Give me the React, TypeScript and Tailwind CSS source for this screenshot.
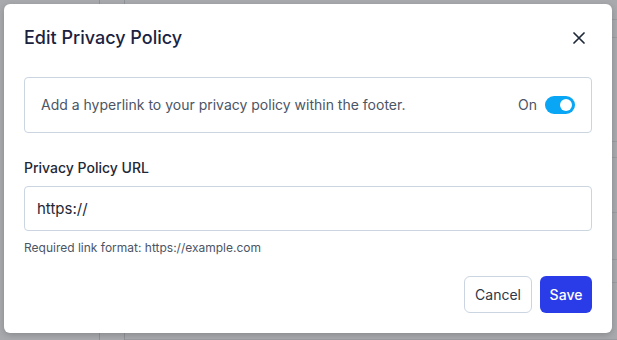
import * as React from 'react'

// Backdrop rows seen through the overlay on the right edge
const rowHeights = [20, 18, 104, 16, 55, 47, 23, 57]

function Toggle({ on }: { on: boolean }) {
  return (
    <span
      className={
        'inline-flex h-[18px] w-[30px] items-center rounded-full px-[3px] ' +
        (on ? 'justify-end bg-[#08a6f4]' : 'justify-start bg-[#cbd5e1]')
      }
    >
      <span className="h-[12px] w-[12px] rounded-full bg-white" />
    </span>
  )
}

export default function App() {
  const [enabled, setEnabled] = React.useState(true)
  const [url, setUrl] = React.useState('https://')

  return (
    <div
      className="relative h-[340px] w-[617px] overflow-hidden bg-[#a8a9ad]"
      style={{ fontFamily: 'Inter, "Noto Sans", sans-serif' }}
    >
      {/* page behind the dim overlay */}
      <div className="flex h-full">
        <div className="w-[100px] border-r border-[#8f9297]" />
        <div className="w-[25px] border-r border-[#8f9297]" />
        <div className="flex flex-1 flex-col">
          {rowHeights.map((h, i) => (
            <div key={i} className="border-b border-[#9a9ca1]" style={{ height: h }} />
          ))}
        </div>
      </div>

      {/* dialog */}
      <div className="absolute left-[4px] top-[4px] flex h-[329px] w-[608px] flex-col rounded-[6px] bg-white px-5 pb-5 pt-5 shadow-[0_2px_6px_rgba(0,0,0,0.18)]">
        <div className="flex h-[28px] items-center justify-between">
          <h2 className="text-[18px] font-medium leading-[28px] text-[#1b2240]">Edit Privacy Policy</h2>
          <button type="button" aria-label="Close" className="mr-[7px] text-[#1f2937]">
            <svg width="12" height="12" viewBox="0 0 12 12" fill="none" stroke="currentColor" strokeWidth="1.7" strokeLinecap="round">
              <path d="M1 1l10 10M11 1L1 11" />
            </svg>
          </button>
        </div>

        <div className="mt-[25px] flex h-[56px] items-center justify-between rounded-[4px] border border-[#cbd5e1] pl-4 pr-4">
          <span className="text-[14px] leading-5 text-[#4b5565]">
            Add a hyperlink to your privacy policy within the footer.
          </span>
          <button type="button" onClick={() => setEnabled(!enabled)} className="flex items-center gap-[8px]">
            <span className="text-[14px] leading-5 text-[#4b5565]">{enabled ? 'On' : 'Off'}</span>
            <Toggle on={enabled} />
          </button>
        </div>

        <label className="mt-[25px] text-[14px] font-medium leading-5 text-[#1f2937]">Privacy Policy URL</label>
        <input
          value={url}
          onChange={(e) => setUrl(e.target.value)}
          className="mt-[8px] h-[45px] rounded-[4px] border border-[#cbd5e1] pl-3 text-[15px] text-[#1f2937] outline-none"
        />
        <p className="mt-[9px] text-[12px] leading-4 text-[#4b5565]">Required link format: https://example.com</p>

        <div className="mt-auto flex justify-end gap-[8px]">
          <button
            type="button"
            className="h-[37px] rounded-[6px] border border-[#cbd5e1] bg-white px-[10px] text-[14px] text-[#2d3748]"
          >
            Cancel
          </button>
          <button
            type="button"
            className="h-[37px] w-[52px] rounded-[6px] bg-[#2a3ce8] text-[14px] font-medium text-white"
          >
            Save
          </button>
        </div>
      </div>
    </div>
  )
}
